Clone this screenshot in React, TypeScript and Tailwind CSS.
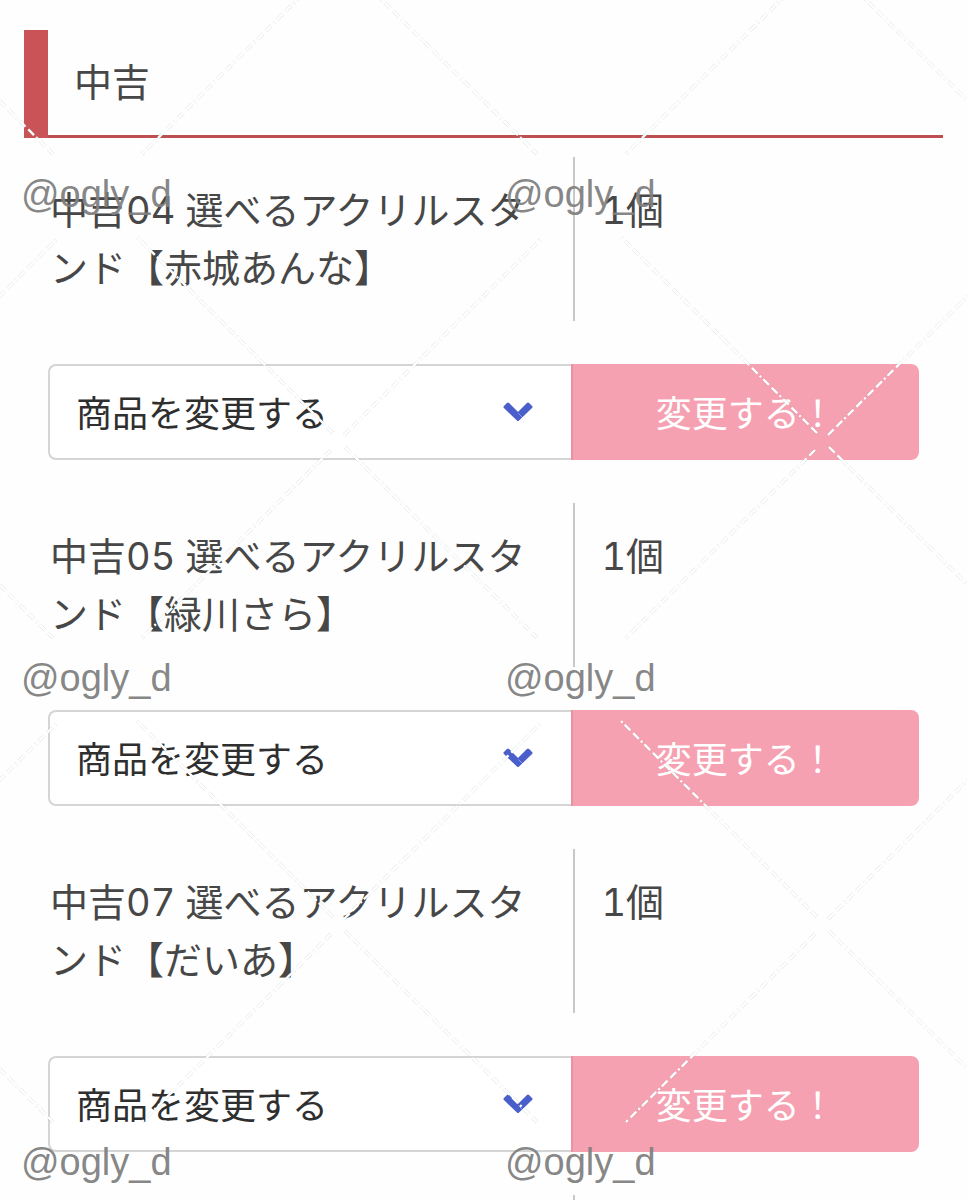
interface Prize {
  id: string
  name: string
  count: string
}

const prizes: Prize[] = [
  { id: "04", name: "中吉04 選べるアクリルスタンド【赤城あんな】", count: "1個" },
  { id: "05", name: "中吉05 選べるアクリルスタンド【緑川さら】", count: "1個" },
  { id: "07", name: "中吉07 選べるアクリルスタンド【だいあ】", count: "1個" },
]

const tiles = Array.from({ length: 12 }, (_, i) => i)

function Chevron() {
  return (
    <svg
      viewBox="0 0 30 20"
      aria-hidden="true"
      className="pointer-events-none absolute right-[38px] top-[38px] h-5 w-[30px]"
    >
      <path
        d="M5 2 15 12 25 2 28 5 15 17.5 2 5Z"
        fill="#4a5fcb"
        stroke="#4a5fcb"
        strokeWidth="3"
        strokeLinejoin="round"
      />
      <path d="M15.5 11.5 19.5 15.5" stroke="#fff" strokeOpacity="0.6" strokeWidth="0.7" />
    </svg>
  )
}

function PrizeRow({ prize }: { prize: Prize }) {
  return (
    <li>
      <div className="flex text-[38px] leading-[58px] tabular-nums text-[#474747]">
        <p className="w-3/5 border-r-2 border-[#c8c8c8] py-6 pl-[26px] pr-4">{prize.name}</p>
        <p className="flex-1 py-6 pl-[26px]">{prize.count}</p>
      </div>
      <form
        className="mx-6 my-[43px] flex h-24 text-[36px]"
        onSubmit={(e) => e.preventDefault()}
      >
        <div className="relative w-3/5">
          <select
            aria-label={prize.name}
            className="h-full w-full appearance-none rounded-l-lg border-2 border-r-0 border-[#d5d5d5] bg-white pl-[26px] pt-1 text-[#2f2f2f]"
          >
            <option>商品を変更する</option>
          </select>
          <Chevron />
        </div>
        <button
          type="submit"
          className="flex-1 rounded-r-lg border-l-2 border-[#ea92a5] bg-[#f6a1b2] pt-1 text-white"
        >
          変更する！
        </button>
      </form>
    </li>
  )
}

function WatermarkLines() {
  const arms = "M333 433 137 237M344 435 540 240M331 450 142 638M345 447 537 638"
  return (
    <svg
      viewBox="0 0 484 484"
      aria-hidden="true"
      className="absolute inset-0 h-full w-full overflow-visible"
      fill="none"
      strokeDasharray="8 4 8 3 2 3"
    >
      <path d={arms} stroke="#5f8080" strokeOpacity="0.2" strokeWidth="3.4" />
      <path d={arms} stroke="#fff" strokeWidth="2.4" />
    </svg>
  )
}

function Watermark() {
  return (
    <div className="pointer-events-none absolute inset-0 overflow-hidden">
      {/* starts one tile early so the arms of outside tiles reach in */}
      <div className="absolute -left-[484px] -top-[484px] grid grid-cols-[484px_484px_484px]">
        {tiles.map((tile) => (
          <div key={tile} className="relative h-[484px]">
            <WatermarkLines />
            {tile > 2 && tile % 3 > 0 && (
              <span className="absolute left-[21px] top-[170px] font-['Liberation_Sans',sans-serif] text-[38px] leading-[48px] text-[#808080]/95">
                @ogly_d
              </span>
            )}
          </div>
        ))}
      </div>
    </div>
  )
}

export default function App() {
  return (
    <main className="relative min-h-screen bg-[#fefefe] px-6 pt-[30px] font-['Inter','Noto_Sans_CJK_JP',sans-serif]">
      <h2 className="relative mb-[19px] border-b-[3px] border-[#bd4f50] pl-[50px] text-[38px] leading-[57px] text-[#474747]">
        <span className="absolute -bottom-[3px] left-0 top-0 w-6 bg-[#c95356]" />
        <span className="block py-6">中吉</span>
      </h2>
      <ul>
        {prizes.map((prize) => (
          <PrizeRow key={prize.id} prize={prize} />
        ))}
      </ul>
      <div className="h-[5px] w-3/5 border-r-2 border-[#c8c8c8]" />
      <Watermark />
    </main>
  )
}
